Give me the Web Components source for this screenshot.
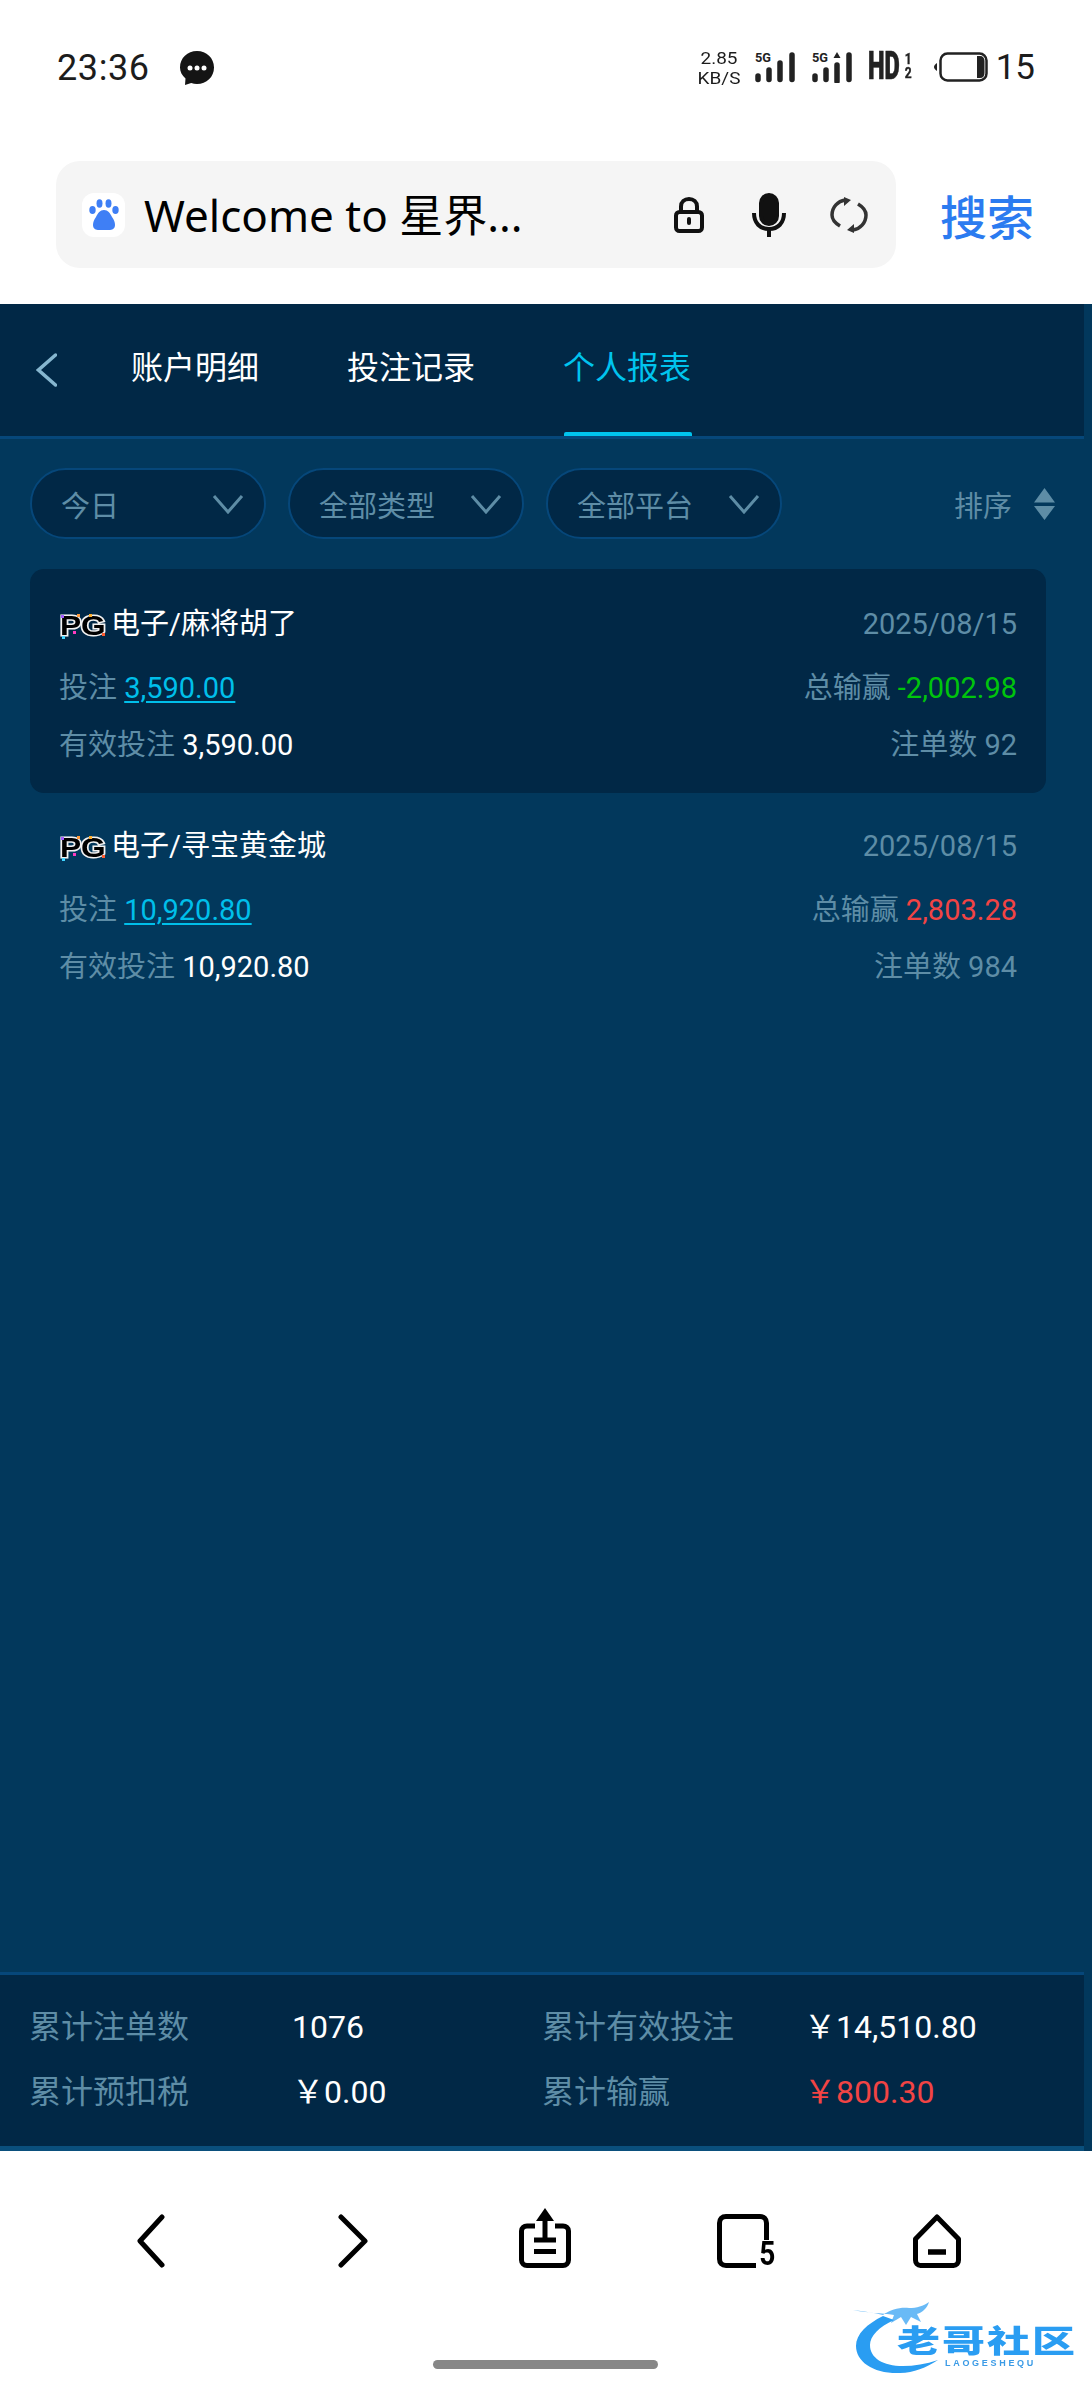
<!DOCTYPE html>
<html lang="zh">
<head>
<meta charset="utf-8">
<title>个人报表</title>
<style>
  html, body { margin: 0; height: 2400px; background: #fff; }
  body {
    display: flex;
    flex-direction: column;
    position: relative;
    overflow: hidden;
    font-family: Roboto, "Noto Sans CJK SC", sans-serif;
  }
</style>
</head>
<body>
<status-bar></status-bar>
<url-bar></url-bar>
<report-page>
  <report-tabs slot="tabs"></report-tabs>
  <filter-row slot="filters">
    <filter-pill>今日</filter-pill>
    <filter-pill>全部类型</filter-pill>
    <filter-pill>全部平台</filter-pill>
  </filter-row>
  <report-card active game="电子/麻将胡了" date="2025/08/15" bet="3,590.00" win="-2,002.98" tone="loss" valid="3,590.00" count="92"></report-card>
  <report-card game="电子/寻宝黄金城" date="2025/08/15" bet="10,920.80" win="2,803.28" tone="gain" valid="10,920.80" count="984"></report-card>
  <report-summary slot="summary"></report-summary>
</report-page>
<browser-nav></browser-nav>
<site-mark></site-mark>

<script>
class StatusBar extends HTMLElement {
  constructor() {
    super();
    this.attachShadow({ mode: 'open' });
    const bars = (extra) => `
      <svg width="42" height="32" viewBox="0 0 42 32">
        <text x="0" y="11" font-family="Roboto" font-weight="700" font-size="13" fill="#222" textLength="16" lengthAdjust="spacingAndGlyphs">5G</text>
        <g stroke="#222" stroke-width="5.5" stroke-linecap="round">
          <path d="M3 25v3.500M14 19v9.500M25 ${extra ? 14 : 12}v16.500M37 4v24.500"/>
        </g>
        ${extra ? '<path d="M25 1l3.500 6h-7z" fill="#222"/>' : ''}
      </svg>`;
    this.shadowRoot.innerHTML = `
      <style>
        :host { display: flex; flex: none; height: 161px; box-sizing: border-box; padding: 50px 57px 0; align-items: flex-start; color: #1c1c1c; font-family: Roboto, sans-serif; }
        .time { font-size: 36px; line-height: 36px; letter-spacing: 0.6px; }
        .msg { margin-left: 29px; }
        .right { margin-left: auto; display: flex; align-items: flex-start; }
        .speed { font-size: 16.500px; line-height: 19.500px; text-align: center; width: 42px; margin-top: -1px; transform: scaleX(1.150); }
        .sig1 { margin-left: 15px; margin-top: 1px; }
        .sig2 { margin-left: 15px; margin-top: 1px; }
        .hd { margin-left: 14px; margin-top: -2px; font-weight: 700; width: 54px; display: flex; color: #222; }
        .hd b { font-size: 38px; line-height: 36px; display: block; width: 36px; transform: scaleX(.62); transform-origin: left center; white-space: nowrap; -webkit-text-stroke: .6px #222; }
        .hd small { font-size: 15px; line-height: 14px; text-align: center; display: block; margin-top: 4px; font-weight: 700; transform: scaleX(.8); -webkit-text-stroke: .4px #222; }
        .batt { margin-left: 11px; margin-top: 2px; }
        .lvl { font-size: 35px; line-height: 36px; margin-left: 8px; }
      </style>
      <span class="time">23:36</span>
      <svg class="msg" width="36" height="36" viewBox="0 0 36 36">
        <path d="M18 1c9.500 0 17 7 17 16.500 0 9.500-7.500 16.500-17 16.500-2 0-4-.3-5.800-1L6 35l.5-6.500C3 25.500 1 21.500 1 17.500 1 8 8.500 1 18 1z" fill="#141414"/>
        <circle cx="11" cy="18" r="2.500" fill="#fff"/><circle cx="18" cy="18" r="2.500" fill="#fff"/><circle cx="25" cy="18" r="2.500" fill="#fff"/>
      </svg>
      <div class="right">
        <div class="speed">2.85<br>KB/S</div>
        <span class="sig1">${bars(false)}</span>
        <span class="sig2">${bars(true)}</span>
        <div class="hd"><b>HD</b><small>1<br>2</small></div>
        <svg class="batt" width="55" height="30" viewBox="0 0 55 30">
          <path d="M4 11c-2 1-3 3-3 4s1 3 3 4z" fill="#222"/>
          <rect x="7.500" y="1.500" width="46" height="27" rx="7" fill="none" stroke="#222" stroke-width="2.500"/>
          <path d="M44 4h3c3 0 4.500 2 4.500 5v12c0 3-1.500 5-4.500 5h-3z" fill="#222"/>
        </svg>
        <span class="lvl">15</span>
      </div>`;
  }
}

class UrlBar extends HTMLElement {
  constructor() {
    super();
    this.attachShadow({ mode: 'open' });
    this.shadowRoot.innerHTML = `
      <style>
        :host { display: flex; flex: none; height: 143px; box-sizing: border-box; padding: 0 58px 36px 56px; align-items: stretch; font-family: "Noto Sans CJK SC", sans-serif; }
        .box { width: 840px; background: #f5f5f5; border-radius: 24px; display: flex; align-items: center; box-sizing: border-box; padding-left: 26px; }
        .fav { width: 43px; height: 44px; border-radius: 12px; background: #fff; display: flex; align-items: center; justify-content: center; flex: none; }
        .txt { margin-left: 19px; font-size: 44px; line-height: 56px; color: #000; white-space: nowrap; width: 400px; font-family: "Noto Sans", "Noto Sans CJK SC", sans-serif; }
        svg.i { flex: none; }
        .go { margin-left: auto; color: #2b7bf0; font-size: 47px; line-height: 107px; font-weight: 500; }
      </style>
      <div class="box">
        <span class="fav">
          <svg width="32" height="32" viewBox="0 0 32 32" fill="#3f7ff5">
            <ellipse cx="4.500" cy="11" rx="3.200" ry="4"/><ellipse cx="11.500" cy="4.500" rx="3" ry="4.200"/><ellipse cx="20.500" cy="4.500" rx="3" ry="4.200"/><ellipse cx="27.500" cy="11" rx="3.200" ry="4"/>
            <path d="M16 11c4 0 6 3 8 7 2 3 3 5 3 8 0 4-3 5-6 5H11c-3 0-6-1-6-5 0-3 1-5 3-8 2-4 4-7 8-7z"/>
          </svg>
        </span>
        <span class="txt">Welcome to 星界...</span>
        <svg class="i" style="margin-left:129px" width="32" height="36" viewBox="0 0 32 36" fill="none" stroke="#111" stroke-width="4">
          <rect x="3" y="15" width="26" height="19" rx="3.500"/>
          <path d="M8 15V9.500C8 5 11.500 2 16 2s8 3 8 7.500V15"/>
          <path d="M16 22v4" stroke-linecap="round"/>
        </svg>
        <svg class="i" style="margin-left:47px" width="34" height="44" viewBox="0 0 34 44" fill="none" stroke="#111" stroke-width="4">
          <rect x="9" y="2" width="16" height="29" rx="8" fill="#111"/>
          <path d="M2 20c0 10 6 16 15 16s15-6 15-16"/><path d="M17 36v8"/>
        </svg>
        <svg class="i" style="margin-left:44px" width="38" height="36" viewBox="0 0 38 36" fill="none" stroke="#333" stroke-width="3.500">
          <path d="M10 29C5 26 2 22 2 18 2 10 8 4 15 3"/>
          <path d="M28 7c5 3 8 7 8 11 0 8-6 14-13 15"/>
          <path d="M14 0v9l7-6zM24 36v-9l-7 6z" fill="#333" stroke="none"/>
        </svg>
      </div>
      <span class="go">搜索</span>`;
  }
}

class ReportPage extends HTMLElement {
  constructor() {
    super();
    this.attachShadow({ mode: 'open' });
    this.shadowRoot.innerHTML = `
      <style>
        :host { display: flex; flex-direction: column; flex: none; height: 1847px; background: #02385c; }
        .list { flex: 1; display: flex; flex-direction: column; padding: 30px 46px 0 30px; }
      </style>
      <slot name="tabs"></slot>
      <slot name="filters"></slot>
      <div class="list"><slot></slot></div>
      <slot name="summary"></slot>`;
  }
}

class ReportTabs extends HTMLElement {
  constructor() {
    super();
    this.attachShadow({ mode: 'open' });
    const names = ['账户明细', '投注记录', '个人报表'];
    this.shadowRoot.innerHTML = `
      <style>
        :host { display: flex; flex: none; width: 1084px; height: 135px; box-sizing: border-box; background: #012846; border-bottom: 3px solid #06477a; padding-left: 36px; }
        svg { margin-top: 49px; flex: none; }
        .tabs { display: flex; gap: 88px; margin-left: 74px; }
        .tab { width: 128px; height: 132px; box-sizing: border-box; padding-top: 44px; font-size: 32px; line-height: 40px; color: #fff; text-align: center; white-space: nowrap; position: relative; }
        .tab.on { color: #00c4ee; }
        .tab.on::after { content: ""; position: absolute; left: 1px; right: -1px; bottom: 0; height: 4px; background: #00c4ee; border-radius: 2px 2px 0 0; }
      </style>
      <svg width="21" height="34" viewBox="0 0 21 34" fill="none" stroke="#86b6cf" stroke-width="3.500" stroke-linecap="round"><path d="M19.500 2L2.500 17l17 15"/></svg>
      <div class="tabs">${names.map((n, i) => `<div class="tab${i === 2 ? ' on' : ''}">${n}</div>`).join('')}</div>`;
  }
}

class FilterRow extends HTMLElement {
  constructor() {
    super();
    this.attachShadow({ mode: 'open' });
    this.shadowRoot.innerHTML = `
      <style>
        :host { display: flex; flex: none; align-items: center; gap: 22px; padding: 29px 37px 0 30px; color: #5e8da6; }
        .sort { margin-left: auto; display: flex; align-items: center; gap: 22px; font-size: 29px; }
      </style>
      <slot></slot>
      <div class="sort">排序
        <svg width="21" height="32" viewBox="0 0 21 32" fill="#5e8da6"><path d="M10.500 0L21 14.500H0zM0 18h21L10.500 32z"/></svg>
      </div>`;
  }
}

class FilterPill extends HTMLElement {
  constructor() {
    super();
    this.attachShadow({ mode: 'open' });
    this.shadowRoot.innerHTML = `
      <style>
        :host { display: flex; align-items: center; width: 236px; height: 71px; box-sizing: border-box; padding: 0 20px 0 29px; background: #012846; border: 2px solid #06477a; border-radius: 36px; font-size: 29px; color: #5e8da6; }
        svg { margin-left: auto; }
      </style>
      <slot></slot>
      <svg width="32" height="20" viewBox="0 0 32 20" fill="none" stroke="#5e8da6" stroke-width="3"><path d="M2 2l14 16L30 2"/></svg>`;
  }
}

class ReportCard extends HTMLElement {
  constructor() {
    super();
    this.attachShadow({ mode: 'open' });
    const a = (n) => this.getAttribute(n);
    this.shadowRoot.innerHTML = `
      <style>
        :host { display: flex; flex-direction: column; box-sizing: border-box; height: 224px; margin-bottom: -2px; padding: 35px 29px 0 29px; border-radius: 14px; font-size: 29px; line-height: 40px; color: #5e8da6; }
        :host([active]) { background: #012846; }
        .row { display: flex; justify-content: space-between; white-space: nowrap; height: 40px; }
        .row.two { margin-top: 24px; }
        .row.three { margin-top: 17px; }
        .title { color: #fff; display: flex; align-items: center; }
        .pg { display: inline-block; width: 48px; height: 26px; margin-right: 4px; margin-top: 3px; position: relative; flex: none; }
        .pg b { position: absolute; left: 1px; top: 0; font: 700 28px/26px "Liberation Sans", sans-serif; color: #000; -webkit-text-stroke: 3px #f2f2f2; paint-order: stroke fill; transform: scaleX(1.130); transform-origin: left center; }
        .pg i { position: absolute; width: 3px; height: 3px; }
        .bet { color: #00bfea; text-decoration: underline; text-underline-offset: 3px; }
        .val { color: #fff; }
        .loss { color: #00c40c; }
        .gain { color: #f24444; }
      </style>
      <div class="row">
        <span class="title"><span class="pg"><b>PG</b><i style="left:2px;top:2px;background:#a45cff"></i><i style="left:18px;top:1px;background:#ff9a3c"></i><i style="left:3px;bottom:0;background:#3fd4ff"></i><i style="left:14px;bottom:5px;background:#ff3cc0"></i><i style="left:30px;top:1px;background:#ffb02e"></i><i style="right:2px;bottom:3px;background:#ff5a2e"></i></span>${a('game')}</span>
        <span>${a('date')}</span>
      </div>
      <div class="row two">
        <span>投注 <span class="bet">${a('bet')}</span></span>
        <span>总输赢 <span class="${a('tone')}">${a('win')}</span></span>
      </div>
      <div class="row three">
        <span>有效投注 <span class="val">${a('valid')}</span></span>
        <span>注单数 ${a('count')}</span>
      </div>`;
  }
}

class ReportSummary extends HTMLElement {
  constructor() {
    super();
    this.attachShadow({ mode: 'open' });
    this.shadowRoot.innerHTML = `
      <style>
        :host { display: grid; flex: none; width: 1084px; height: 179px; box-sizing: border-box; background: #012846; border-top: 3px solid #06477a; border-bottom: 5px solid #0a4f7c; padding: 32px 0 0 29px; grid-template-columns: 263px 250px 262px 1fr; grid-auto-rows: 40px; row-gap: 25px; font-size: 32px; line-height: 40px; color: #5e8da6; white-space: nowrap; }
        .v { color: #fff; }
        .r { color: #f24444; }
      </style>
      <span>累计注单数</span><span class="v">1076</span><span>累计有效投注</span><span class="v">￥14,510.80</span>
      <span>累计预扣税</span><span class="v">￥0.00</span><span>累计输赢</span><span class="v r">￥800.30</span>`;
  }
}

class BrowserNav extends HTMLElement {
  constructor() {
    super();
    this.attachShadow({ mode: 'open' });
    this.shadowRoot.innerHTML = `
      <style>
        :host { display: flex; flex-direction: column; flex: 1; font-family: Roboto, sans-serif; }
        .icons { display: grid; grid-template-columns: 200px 204px 180px 220px 164px; padding: 57px 0 0 51px; height: 60px; align-items: start; justify-items: center; }
        .cell { position: relative; }
        svg { display: block; }
        .n { position: absolute; right: -4px; bottom: 0; font-size: 33px; line-height: 28px; font-weight: 700; color: #000; background: #fff; padding-left: 3px; display: inline-block; transform: scaleX(.85); }
        .pill { width: 225px; height: 9px; border-radius: 5px; background: #878787; margin: 92px auto 0 433px; }
      </style>
      <div class="icons">
        <svg width="30" height="54" style="margin-top:6px" viewBox="0 0 30 54" fill="none" stroke="#000" stroke-width="5" stroke-linecap="round" stroke-linejoin="round"><path d="M26 3L4 27l22 24"/></svg>
        <svg width="32" height="54" style="margin-top:6px" viewBox="0 0 32 54" fill="none" stroke="#000" stroke-width="5" stroke-linecap="round" stroke-linejoin="round"><path d="M4 3l24 24L4 51"/></svg>
        <svg width="52" height="60" viewBox="0 0 52 60" fill="none" stroke="#000" stroke-width="5">
          <path d="M16 18H8c-3 0-5.500 2-5.500 5v29c0 3 2.500 5.500 5.500 5.500h36c3 0 5.500-2.500 5.500-5.500V23c0-3-2.500-5-5.500-5h-8"/>
          <path d="M26 8v22"/><path d="M26 0l9 13H17z" fill="#000" stroke="none"/>
          <path d="M15 32h22M15 43.500h22"/>
        </svg>
        <div class="cell" style="margin-top:6px;width:56px;height:54px">
          <svg width="52" height="54" viewBox="0 0 52 54" fill="none" stroke="#000" stroke-width="5"><path d="M49.500 26V9c0-4-2.500-6.500-6.500-6.500H9C5 2.500 2.500 5 2.500 9v36c0 4 2.500 6.500 6.500 6.500h30"/></svg>
          <span class="n">5</span>
        </div>
        <svg width="48" height="54" style="margin-top:6px" viewBox="0 0 48 54" fill="none" stroke="#000" stroke-width="5" stroke-linejoin="round">
          <path d="M24 3L45.500 25v21c0 3-2 5.500-5 5.500h-33c-3 0-5-2.500-5-5.500V25z"/>
          <path d="M15 38h18" stroke-width="5.500"/>
        </svg>
      </div>
      <div class="pill"></div>`;
  }
}

class SiteMark extends HTMLElement {
  constructor() {
    super();
    this.attachShadow({ mode: 'open' });
    this.shadowRoot.innerHTML = `
      <style>
        :host { display: block; position: absolute; left: 853px; top: 2298px; width: 226px; height: 78px; filter: blur(0.6px); font-family: "Noto Sans CJK SC", sans-serif; }
        svg { position: absolute; left: 0; top: 0; }
        .zh { position: absolute; left: 44px; top: 24px; font-size: 43px; line-height: 44px; font-weight: 900; white-space: nowrap; letter-spacing: 2px; color: #2a9df2; transform: scaleY(.72); transform-origin: left top; }
        .en { position: absolute; left: 92px; top: 60px; font: 700 9px/11px "Liberation Sans", sans-serif; letter-spacing: 2.700px; color: #3b9be6; white-space: nowrap; }
      </style>
      <svg width="100" height="78" viewBox="0 0 100 78" fill="#2a9df2">
        <path d="M30 18C14 26 3 36 3 48c0 16 18 28 44 27 14-.5 26-5 38-13-12 4-24 6-35 6-20 0-33-8-33-21 0-9 9-18 24-25z"/>
        <path d="M0 12c10 1 22 3 30 5 8-6 18-8 26-7 8 0 14-2 20-6-2 6-6 10-12 12l4 8-10-5-5 8-5-8-10 6 3-8c-12-2-28-2-41-5z" opacity=".7"/>
      </svg>
      <span class="zh">老哥社区</span>
      <span class="en">LAOGESHEQU</span>`;
  }
}

customElements.define('status-bar', StatusBar);
customElements.define('url-bar', UrlBar);
customElements.define('report-page', ReportPage);
customElements.define('report-tabs', ReportTabs);
customElements.define('filter-row', FilterRow);
customElements.define('filter-pill', FilterPill);
customElements.define('report-card', ReportCard);
customElements.define('report-summary', ReportSummary);
customElements.define('browser-nav', BrowserNav);
customElements.define('site-mark', SiteMark);
</script>
</body>
</html>
